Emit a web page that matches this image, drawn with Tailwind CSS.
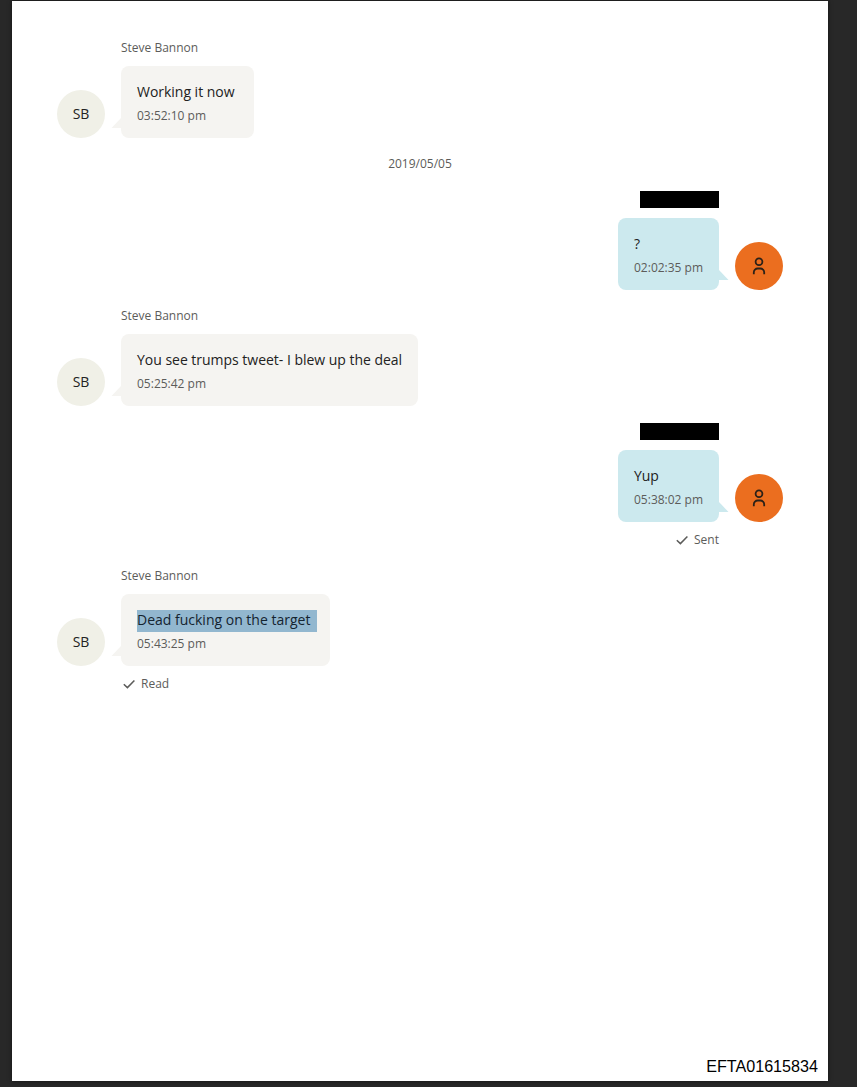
<!DOCTYPE html>
<html lang="en">

<head>
  <meta charset="UTF-8" />
  <title>Messages</title>
  <script src="https://cdn.jsdelivr.net/npm/@tailwindcss/browser@4"></script>
</head>

<body class="h-[1087px] overflow-hidden bg-[#282828] pl-3 pt-px font-['Open_Sans','Noto_Sans',sans-serif] text-xs text-[#5c5c5a]">

  <div class="flex flex-col w-[816px] h-[1080px] bg-white pt-[37px] px-[45px] shadow-[0_0_4px_rgba(0,0,0,0.6)]">
    <main class="flex flex-col gap-4">

      <section class="flex flex-col items-start gap-2">
        <div class="h-5 leading-5 ml-16">Steve Bannon</div>
        <div class="flex items-end gap-4">
          <div class="flex items-center justify-center size-12 rounded-full bg-[#f0f0e7] text-sm tracking-[-0.02px] text-[#222]">SB</div>
          <div class="relative h-[72px] w-[133px] rounded-lg bg-[#f5f4f1] p-4">
            <p class="pb-0.5 text-sm leading-5 tracking-[-0.02px] text-[#222] whitespace-nowrap">Working it now</p>
            <p class="mt-1 leading-4 whitespace-nowrap">03:52:10 pm</p>
            <svg class="absolute -left-[10px] bottom-[10px]" width="10" height="10" viewBox="0 0 10 10" fill="#f5f4f1"><path d="M10 0V10H.5Z" /></svg>
          </div>
        </div>
      </section>

      <div class="h-5 leading-5 text-center">2019/05/05</div>

      <section class="flex flex-col items-end gap-2">
        <div class="h-5 mr-16 pt-px"><div class="w-[79px] h-[17px] bg-black"></div></div>
        <div class="flex items-end gap-4">
          <div class="relative h-[72px] w-[101px] rounded-lg bg-[#cce9ee] p-4">
            <p class="pb-0.5 text-sm leading-5 tracking-[-0.02px] text-[#222] whitespace-nowrap">?</p>
            <p class="mt-1 leading-4 whitespace-nowrap">02:02:35 pm</p>
            <svg class="absolute -right-[10px] bottom-[10px]" width="10" height="10" viewBox="0 0 10 10" fill="#cce9ee"><path d="M0 0V10H9.5Z" /></svg>
          </div>
          <div class="flex items-center justify-center size-12 rounded-full bg-[#eb6e1f]">
            <svg width="24" height="24" viewBox="0 0 24 24" fill="none" stroke="#2b2118" stroke-width="1.8"><circle cx="12" cy="7.7" r="3.4" /><path d="M6.8 20.2v-1.8a3.9 3.9 0 0 1 3.9-3.9h2.6a3.9 3.9 0 0 1 3.9 3.9v1.8" /></svg>
          </div>
        </div>
      </section>

      <section class="flex flex-col items-start gap-2">
        <div class="h-5 leading-5 ml-16">Steve Bannon</div>
        <div class="flex items-end gap-4">
          <div class="flex items-center justify-center size-12 rounded-full bg-[#f0f0e7] text-sm tracking-[-0.02px] text-[#222]">SB</div>
          <div class="relative h-[72px] w-[297px] rounded-lg bg-[#f5f4f1] p-4">
            <p class="pb-0.5 text-sm leading-5 tracking-[-0.02px] text-[#222] whitespace-nowrap">You see trumps tweet- I blew up the deal</p>
            <p class="mt-1 leading-4 whitespace-nowrap">05:25:42 pm</p>
            <svg class="absolute -left-[10px] bottom-[10px]" width="10" height="10" viewBox="0 0 10 10" fill="#f5f4f1"><path d="M10 0V10H.5Z" /></svg>
          </div>
        </div>
      </section>

      <section class="flex flex-col items-end gap-2">
        <div class="h-5 mr-16 pt-px"><div class="w-[79px] h-[17px] bg-black"></div></div>
        <div class="flex items-end gap-4">
          <div class="relative h-[72px] w-[101px] rounded-lg bg-[#cce9ee] p-4">
            <p class="pb-0.5 text-sm leading-5 tracking-[-0.02px] text-[#222] whitespace-nowrap">Yup</p>
            <p class="mt-1 leading-4 whitespace-nowrap">05:38:02 pm</p>
            <svg class="absolute -right-[10px] bottom-[10px]" width="10" height="10" viewBox="0 0 10 10" fill="#cce9ee"><path d="M0 0V10H9.5Z" /></svg>
          </div>
          <div class="flex items-center justify-center size-12 rounded-full bg-[#eb6e1f]">
            <svg width="24" height="24" viewBox="0 0 24 24" fill="none" stroke="#2b2118" stroke-width="1.8"><circle cx="12" cy="7.7" r="3.4" /><path d="M6.8 20.2v-1.8a3.9 3.9 0 0 1 3.9-3.9h2.6a3.9 3.9 0 0 1 3.9 3.9v1.8" /></svg>
          </div>
        </div>
        <div class="flex items-center gap-1 h-5 mr-16">
          <svg width="16" height="16" viewBox="0 0 16 16" fill="none" stroke="#5c5c5a" stroke-width="1.5"><path d="M2.8 8.2l3.6 3.4L13.4 4.4" /></svg>
          <span>Sent</span>
        </div>
      </section>

      <section class="flex flex-col items-start gap-2">
        <div class="h-5 leading-5 ml-16">Steve Bannon</div>
        <div class="flex items-end gap-4">
          <div class="flex items-center justify-center size-12 rounded-full bg-[#f0f0e7] text-sm tracking-[-0.02px] text-[#222]">SB</div>
          <div class="relative h-[72px] w-[209px] rounded-lg bg-[#f5f4f1] p-4">
            <!-- selected text -->
            <p class="w-[180px] pb-0.5 bg-[#92b7cf] text-sm leading-5 text-[#142430] whitespace-nowrap">Dead fucking on the target</p>
            <p class="mt-1 leading-4 whitespace-nowrap">05:43:25 pm</p>
            <svg class="absolute -left-[10px] bottom-[10px]" width="10" height="10" viewBox="0 0 10 10" fill="#f5f4f1"><path d="M10 0V10H.5Z" /></svg>
          </div>
        </div>
        <div class="flex items-center gap-1 h-5 ml-16">
          <svg width="16" height="16" viewBox="0 0 16 16" fill="none" stroke="#5c5c5a" stroke-width="1.5"><path d="M2.8 8.2l3.6 3.4L13.4 4.4" /></svg>
          <span>Read</span>
        </div>
      </section>

    </main>

    <footer class="mt-auto -mr-[35px] mb-[5px] text-right text-[16.15px] leading-5 text-black font-['Liberation_Sans',sans-serif]">EFTA01615834</footer>
  </div>

</body>

</html>
